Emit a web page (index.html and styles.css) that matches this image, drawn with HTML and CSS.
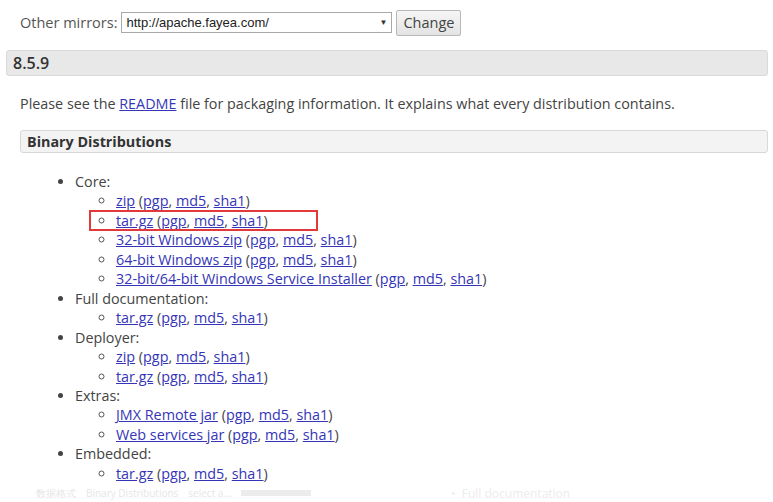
FILE: index.html
```html
<!DOCTYPE html>
<html>
<head>
<meta charset="utf-8">
<link rel="stylesheet" href="styles.css">
</head>
<body>
<form class="mirrors">
  <span class="label">Other mirrors:</span>
  <div class="select"><span>http://apache.fayea.com/</span><span class="arrow">▼</span></div>
  <button type="button" class="btn">Change</button>
</form>
<h2 class="ver">8.5.9</h2>
<div class="section">
  <p class="intro">Please see the <a href="#">README</a> file for packaging information. It explains what every distribution contains.</p>
  <h3 class="sub">Binary Distributions</h3>
  <ul class="outer">
    <li>Core:
      <ul class="inner">
        <li><a href="#">zip</a> (<a href="#">pgp</a>, <a href="#">md5</a>, <a href="#">sha1</a>)</li>
        <li class="hl"><span class="box"><a href="#">tar.gz</a> (<a href="#">pgp</a>, <a href="#">md5</a>, <a href="#">sha1</a>)</span></li>
        <li><a href="#">32-bit Windows zip</a> (<a href="#">pgp</a>, <a href="#">md5</a>, <a href="#">sha1</a>)</li>
        <li><a href="#">64-bit Windows zip</a> (<a href="#">pgp</a>, <a href="#">md5</a>, <a href="#">sha1</a>)</li>
        <li><a href="#">32-bit/64-bit Windows Service Installer</a> (<a href="#">pgp</a>, <a href="#">md5</a>, <a href="#">sha1</a>)</li>
      </ul>
    </li>
    <li>Full documentation:
      <ul class="inner">
        <li><a href="#">tar.gz</a> (<a href="#">pgp</a>, <a href="#">md5</a>, <a href="#">sha1</a>)</li>
      </ul>
    </li>
    <li>Deployer:
      <ul class="inner">
        <li><a href="#">zip</a> (<a href="#">pgp</a>, <a href="#">md5</a>, <a href="#">sha1</a>)</li>
        <li><a href="#">tar.gz</a> (<a href="#">pgp</a>, <a href="#">md5</a>, <a href="#">sha1</a>)</li>
      </ul>
    </li>
    <li>Extras:
      <ul class="inner">
        <li><a href="#">JMX Remote jar</a> (<a href="#">pgp</a>, <a href="#">md5</a>, <a href="#">sha1</a>)</li>
        <li><a href="#">Web services jar</a> (<a href="#">pgp</a>, <a href="#">md5</a>, <a href="#">sha1</a>)</li>
      </ul>
    </li>
    <li>Embedded:
      <ul class="inner">
        <li><a href="#">tar.gz</a> (<a href="#">pgp</a>, <a href="#">md5</a>, <a href="#">sha1</a>)</li>
      </ul>
    </li>
  </ul>
</div>
<div class="ghost">
  <span class="g1">数据格式　Binary Distributions　select a...</span>
  <span class="gbar"></span>
  <span class="g2">• &nbsp;Full documentation</span>
</div>
</body>
</html>
```
FILE: styles.css
```css
html, body {
  margin: 0;
  padding: 0;
  background: #fff;
  overflow: hidden;
}
body {
  font-family: "Open Sans", "Liberation Sans", sans-serif;
  font-size: 14.35px;
  color: #444;
  width: 773px;
  height: 502px;
  position: relative;
}
a {
  color: #3535b8;
  text-decoration: underline;
}
.mirrors {
  display: flex;
  align-items: center;
  padding: 10px 0 0 20px;
  height: 25px;
  margin: 0;
}
.label {
  font-size: 14.5px;
  color: #555;
  margin-right: 4px;
}
.select {
  width: 261px;
  height: 19px;
  border: 1px solid #a9a9a9;
  display: flex;
  align-items: center;
  justify-content: space-between;
  padding: 0 4px 0 4px;
  box-sizing: content-box;
  font-family: "Liberation Sans", Arial, sans-serif;
  font-size: 13px;
  color: #222;
}
.select .arrow {
  font-size: 8px;
  color: #333;
}
.btn {
  margin-left: 4px;
  height: 26px;
  width: 65px;
  border: 1px solid #b8b8b8;
  border-radius: 2px;
  background: linear-gradient(#f6f6f6, #e3e3e3);
  font-family: "Open Sans", "Liberation Sans", sans-serif;
  font-size: 14.5px;
  color: #444;
  padding: 0;
}
.ver {
  margin: 15px 5px 0 6px;
  height: 26px;
  box-sizing: border-box;
  background: #e8e8e8;
  border: 1px solid #dadada;
  border-radius: 3px;
  font-size: 16px;
  font-weight: 600;
  color: #333;
  line-height: 24px;
  padding-left: 6px;
}
.section {
  padding-left: 20px;
  padding-right: 5px;
}
.intro {
  margin: 18px 0 0 0;
  line-height: 20px;
}
.sub {
  margin: 16px 0 0 0;
  height: 23px;
  box-sizing: border-box;
  background: #f3f3f3;
  border: 1px solid #d8d8d8;
  border-radius: 3px;
  font-size: 14.35px;
  font-weight: 700;
  color: #333;
  line-height: 21px;
  padding-left: 6px;
}
ul {
  margin: 0;
  padding: 0;
}
.outer {
  margin-top: 19px;
  padding-left: 55px;
  list-style: disc;
  line-height: 19.45px;
}
.inner {
  padding-left: 41px;
  list-style: circle;
}
.inner li::marker {
  color: #555;
}
.box {
  position: relative;
}
.box::before {
  content: "";
  position: absolute;
  left: -27px;
  top: -1px;
  width: 225px;
  height: 17px;
  border: 2px solid #e2393b;
  pointer-events: none;
}
.ghost {
  position: absolute;
  left: 0;
  right: 0;
  top: 484px;
  height: 18px;
  display: flex;
  align-items: center;
  font-size: 12px;
  color: #e6e6e6;
  padding-left: 36px;
}
.g1 {
  width: 205px;
  white-space: nowrap;
  font-size: 10px;
}
.gbar {
  width: 70px;
  height: 6px;
  background: #ececec;
  margin-right: 140px;
}
.g2 {
  color: #ececec;
}
```
